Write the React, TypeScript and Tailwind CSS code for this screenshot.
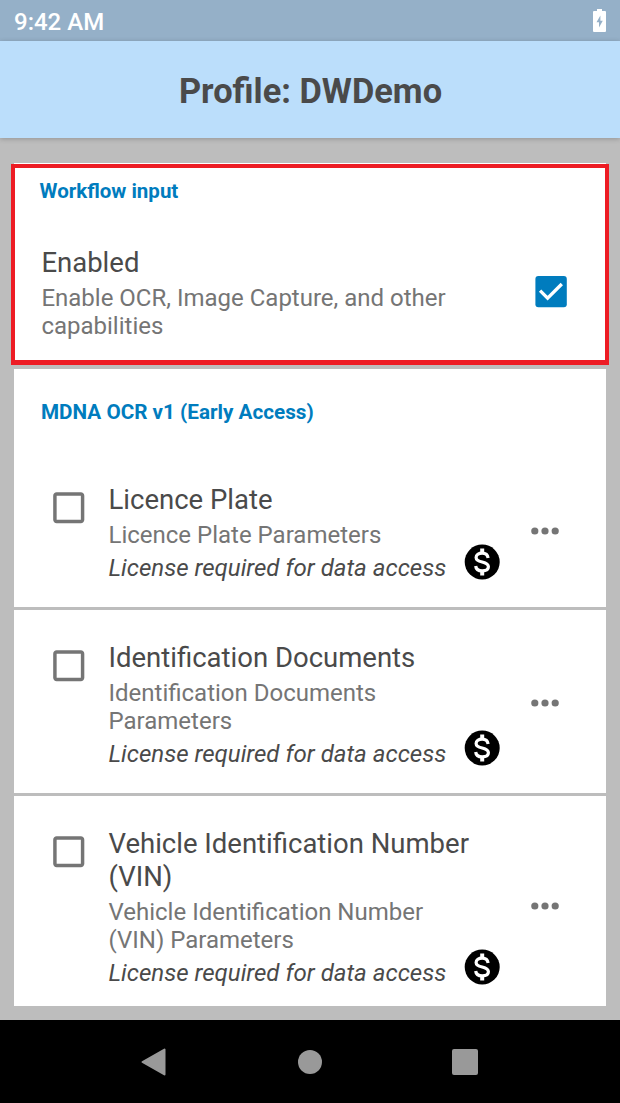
import type { ReactNode } from "react";
import { MdCheckBoxOutlineBlank } from "react-icons/md";

function StatusBar() {
  return (
    <div className="flex h-[41px] shrink-0 items-center justify-between bg-[#95b0c8] pl-[14px] pr-[14px]">
      <span className="pt-[2px] text-[24px] leading-[28px] font-medium text-white">9:42 AM</span>
      <svg width="13" height="23" viewBox="0 0 13 23" className="block">
        <path fill="#fff" fillRule="evenodd" d="M4 0H9V2H12Q13 2 13 3V22Q13 23 12 23H1Q0 23 0 22V3Q0 2 1 2H4ZM7.4 6.5L3.5 13.2H6V18.5L9.8 11.8H7.4Z" />
      </svg>
    </div>
  );
}

function Dots() {
  return (
    <svg width="28" height="8" viewBox="0 0 28 8" fill="#757575" className="mt-[3px] block">
      <circle cx="3.8" cy="4" r="3.6" />
      <circle cx="14" cy="4" r="3.6" />
      <circle cx="24.2" cy="4" r="3.6" />
    </svg>
  );
}

function DollarBadge() {
  return (
    <svg width="42" height="42" viewBox="0 0 42 42" className="-mt-[12px] block shrink-0">
      <circle cx="21.2" cy="21" r="17.5" fill="#000" />
      <path
        d="M27.1 17C26.6 13.6 24.2 12.2 21.2 12.2C17.6 12.2 15.1 13.8 15.1 16.4C15.1 19.2 17.5 20.1 21.2 21C25.1 21.9 27.4 23 27.4 25.8C27.4 28.6 24.6 29.9 21.2 29.9C17.5 29.9 15 28.3 14.7 25"
        fill="none"
        stroke="#fff"
        strokeWidth="3.2"
      />
      <path d="M19.2 7.6H23.2V12H19.2ZM19.2 30H23.2V34.6H19.2Z" fill="#fff" />
    </svg>
  );
}

function OptionRow({ title, summary }: { title: ReactNode; summary: ReactNode }) {
  return (
    <div className="flex bg-white pt-[31px] pb-[25px] pl-[34px]">
      <MdCheckBoxOutlineBlank size={41.5} color="#757575" className="mt-[3.5px] shrink-0" />
      <div className="ml-[19px] w-[414px] shrink-0">
        <div className="text-[27.5px] leading-[33px] text-[#4a4a4a]">{title}</div>
        <div className="mt-[5px] text-[24px] leading-[28px] text-[#757575]">{summary}</div>
        <div className="mt-[5px] flex h-[28px] items-center">
          <span className="w-[352.5px] text-[24.05px] leading-[28px] whitespace-nowrap text-[#4a4a4a] italic">
            License required for data access
          </span>
          <DollarBadge />
        </div>
      </div>
      <div className="-mt-[31px] -mb-[25px] ml-[8.5px] flex items-center">
        <Dots />
      </div>
    </div>
  );
}

export default function App() {
  return (
    <div className="flex h-[1103px] w-[620px] flex-col overflow-hidden bg-[#bdbdbd] font-['Roboto',sans-serif]">
      <StatusBar />
      <header className="flex h-[97px] shrink-0 items-center justify-center bg-[#bbdefb] pt-[3px] pl-px shadow-[0_1px_5px_rgba(0,0,0,0.22)]">
        <h1 className="text-[34.4px] leading-[40px] font-bold text-[#4a4a4a]">Profile: DWDemo</h1>
      </header>

      <main className="flex h-[882px] shrink-0 flex-col overflow-hidden pt-[25px]">
        <div className="mx-[14px] h-px shrink-0 bg-white" />
        <section className="mr-[11px] ml-[11px] flex h-[201px] shrink-0 flex-col border-[5px] border-t-4 border-r-4 border-l-4 border-[#ed1c24] bg-white">
          <h2 className="mt-[11px] ml-[24.5px] text-[20.5px] leading-[24px] font-bold text-[#007cbe]">Workflow input</h2>
          <div className="mt-[43px] ml-[26.4px] flex">
            <div className="w-[480px]">
              <div className="text-[27.5px] leading-[33px] text-[#4a4a4a]">Enabled</div>
              <div className="mt-[5px] text-[24px] leading-[28px] text-[#757575]">
                Enable OCR, Image Capture, and other
                <br />
                capabilities
              </div>
            </div>
            <svg width="42" height="42" viewBox="0 0 42 42" className="mt-[24px] ml-[8.6px] block">
              <rect x="5.4" y="6.1" width="31.4" height="31.2" rx="3" fill="#007cbe" />
              <path d="M10.1 20.7L17.6 28.2L31.8 14" fill="none" stroke="#fff" strokeWidth="3.3" />
            </svg>
          </div>
        </section>

        <div className="mx-[14px] mt-[4px] flex h-[637px] shrink-0 flex-col gap-[3px] overflow-hidden">
          <section className="shrink-0 bg-white">
            <h2 className="h-[83px] pt-[31px] pl-[27px] text-[20.7px] leading-[24px] font-bold text-[#007cbe]">
              MDNA OCR v1 (Early Access)
            </h2>
            <OptionRow title="Licence Plate" summary="Licence Plate Parameters" />
          </section>
          <section className="shrink-0">
            <OptionRow
              title="Identification Documents"
              summary={<>Identification Documents<br />Parameters</>}
            />
          </section>
          <section className="shrink-0">
            <OptionRow
              title={<>Vehicle Identification Number<br />(VIN)</>}
              summary={<>Vehicle Identification Number<br />(VIN) Parameters</>}
            />
          </section>
        </div>
      </main>

      <nav className="flex grow items-center bg-black pl-[141px]">
        <svg width="25" height="28" viewBox="0 0 25 28" className="block">
          <path d="M1.5 14L23.5 1.5V26.5Z" fill="#999" stroke="#999" strokeWidth="2" strokeLinejoin="round" />
        </svg>
        <div className="ml-[132px] size-[24px] rounded-full bg-[#999]" />
        <div className="ml-[130px] size-[26px] rounded-[2px] bg-[#999]" />
      </nav>
    </div>
  );
}
